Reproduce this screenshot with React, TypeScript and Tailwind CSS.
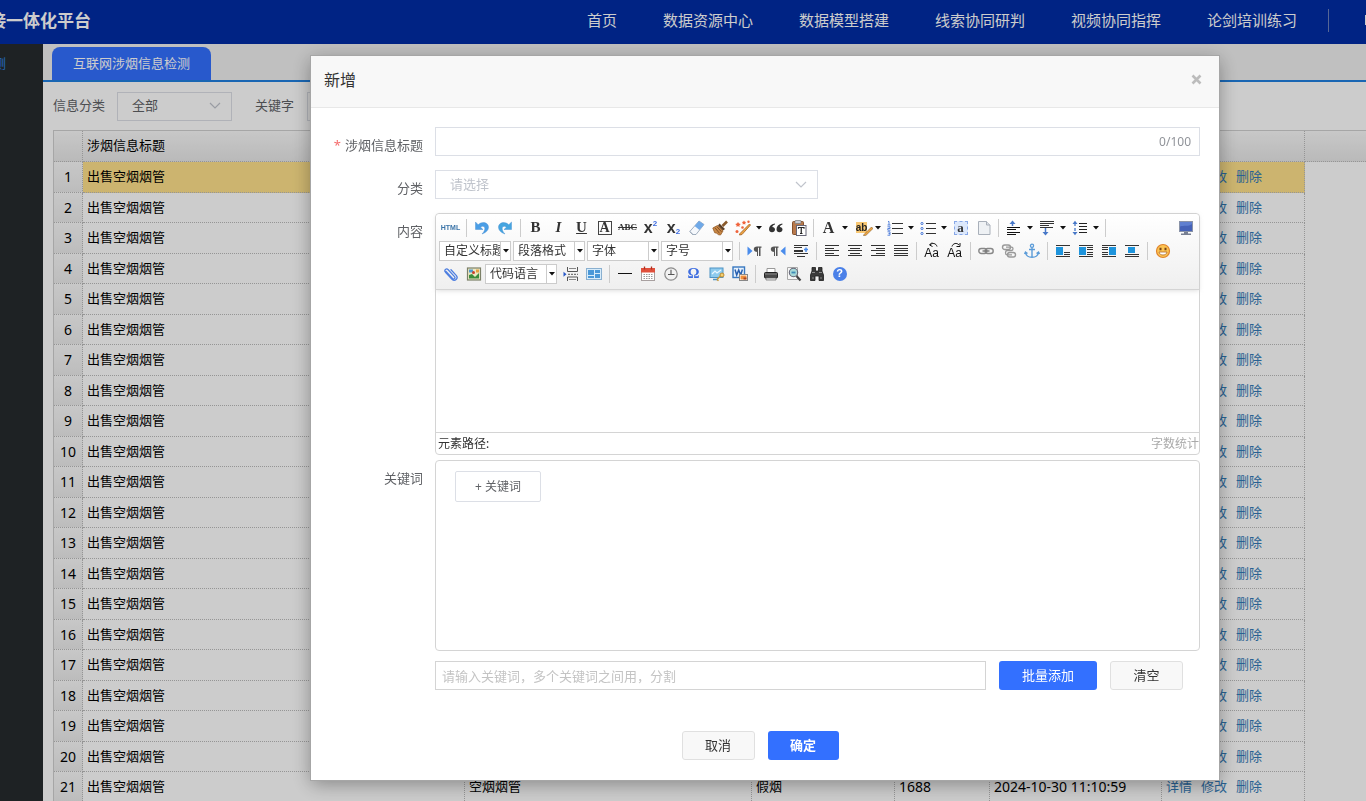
import type { ReactNode } from "react";

const navItems = [
  "首页",
  "数据资源中心",
  "数据模型搭建",
  "线索协同研判",
  "视频协同指挥",
  "论剑培训练习",
];

const rows = Array.from({ length: 21 }, (_, i) => ({
  id: i + 1,
  title: "出售空烟烟管",
  name: "空烟烟管",
  type: "假烟",
  count: 1688,
  time: "2024-10-30 11:10:59",
}));

const Svg = ({ children }: { children: ReactNode }) => (
  <svg width="16" height="16" viewBox="0 0 16 16" fill="none" aria-hidden="true">
    {children}
  </svg>
);

const Lines = ({ d, color = "#333" }: { d: string; color?: string }) => (
  <path d={d} stroke={color} strokeWidth="1" shapeRendering="crispEdges" />
);

const Caret = () => (
  <svg width="6" height="4" viewBox="0 0 6 4" className="shrink-0" aria-hidden="true">
    <path d="M0 0h6L3 3.5z" fill="#111" />
  </svg>
);

const Chevron = () => (
  <svg
    width="12"
    height="8"
    viewBox="0 0 12 8"
    fill="none"
    className="pointer-events-none shrink-0"
    aria-hidden="true"
  >
    <path d="M1 1l5 5 5-5" stroke="#c0c4cc" strokeWidth="1.2" />
  </svg>
);

const Serif = ({ children, className = "" }: { children: ReactNode; className?: string }) => (
  <span className={"font-['Liberation_Serif',serif] leading-none text-[#333] " + className}>
    {children}
  </span>
);

const UndoIcon = () => (
  <Svg>
    <path d="M1.500 2v7.500H9L6.600 7.200c2-1.600 4.200-.8 4.200 1.500 0 1.800-1 3.300-2.800 5.300 4.400-1.600 6.500-4 6.500-6.800C14.500 2.500 8.200.8 4.200 4.700z" fill="#4a9ee6" stroke="#3c86cc" strokeWidth=".4" />
  </Svg>
);

const RedoIcon = () => (
  <Svg>
    <path d="M14.500 2v7.500H7l2.400-2.300c-2-1.600-4.200-.8-4.200 1.500 0 1.800 1 3.300 2.800 5.300-4.400-1.600-6.500-4-6.500-6.800C1.500 2.500 7.800.8 11.800 4.700z" fill="#45a5e0" stroke="#3c86cc" strokeWidth=".4" />
  </Svg>
);

const EraserIcon = () => (
  <Svg>
    <path d="M10 1L15 4.500 7 14.500H3.500L.8 11.500z" fill="#f5f8fc" stroke="#8c9cae" strokeWidth=".8" />
    <path d="M10 1L15 4.500l-4.500 5.600L5.600 6z" fill="#6fa9e8" />
    <path d="M.8 11.500l3.200 3" stroke="#9aa8b8" strokeWidth="1" />
  </Svg>
);

const BroomIcon = () => (
  <Svg>
    <path d="M15 1.500L10.500 6" stroke="#8a5a2b" strokeWidth="2.600" />
    <path d="M7.500 3.500l5.500 5.500-2 1.500L6 5.500z" fill="#5c3e24" />
    <path d="M5.500 5.500l5.500 5.500L8.500 15l-2-.3-1.800-1.500-2-.5L.8 8z" fill="#c98846" stroke="#945a26" strokeWidth=".8" />
    <path d="M3 7.800l4.500 5.500M5 6.800l4.500 5" stroke="#7a4820" strokeWidth=".9" />
  </Svg>
);

const MagicIcon = () => (
  <Svg>
    <path d="M5 13.500L14.500 4l1 1L7 14.500l-2.500.5z" fill="#f0a640" stroke="#a8692c" strokeWidth=".9" />
    <g fill="#f0643c">
      <path d="M3 2l1 1.500L5.800 4 4.400 5.200 4.500 7 3 6 1.500 7l.1-1.800L.2 4 2 3.500z" />
      <path d="M9 .5l.8 1.200 1.400.3-1 1 .2 1.500L9 3.900l-1.400.6.200-1.500-1-1 1.400-.3z" />
      <circle cx="13.500" cy="1.800" r="1.200" />
      <circle cx="7.500" cy="7.500" r="1.300" />
      <circle cx="2" cy="11.500" r="1.500" />
    </g>
  </Svg>
);

const QuoteIcon = () => (
  <Svg>
    <g fill="#333">
      <path d="M6.800 3.500C3 4 1 6.200 1 9.300 1 11.300 2.300 12.300 4 12.300c1.800 0 3-1.100 3-2.700 0-1.500-1.100-2.500-2.700-2.500C4.500 5.800 5.300 5 7 4.500z" />
      <path d="M14.300 3.500c-3.800.5-5.800 2.700-5.800 5.800 0 2 1.300 3 3 3 1.800 0 3-1.100 3-2.700 0-1.500-1.100-2.500-2.700-2.500.2-1.300 1-2.100 2.700-2.600z" />
    </g>
  </Svg>
);

const PasteIcon = () => (
  <Svg>
    <rect x="1.500" y="1.500" width="11" height="13" rx="1" fill="#b8794c" stroke="#85512c" />
    <rect x="4" y=".5" width="6" height="3" rx=".6" fill="#c9ccd2" stroke="#777" strokeWidth=".7" />
    <rect x="5.500" y="5.500" width="9.500" height="10" fill="#fff" stroke="#667" />
    <path d="M7.500 8.800V7.500H13v1.300M10.250 7.500v6M9 13.500h2.500" stroke="#222" strokeWidth="1.200" />
  </Svg>
);

const HighlightIcon = () => (
  <span className="relative flex h-4 w-4 items-center justify-center">
    <span className="bg-[#f9c873] font-['Liberation_Sans',sans-serif] text-[10px] leading-[11px] font-bold text-[#222]">ab</span>
    <svg width="10" height="10" viewBox="0 0 10 10" className="absolute right-[-3px] bottom-0" aria-hidden="true">
      <path d="M1 8.500L8.500 1 10 2.500 3 9.300l-2.500.3z" fill="#f0a640" stroke="#855c2c" strokeWidth=".6" />
    </svg>
  </span>
);

const OrderedIcon = () => (
  <Svg>
    <Lines d="M5 3.500h11M5 8.500h11M5 13.500h11" />
    <path d="M1 1.500h1V5M.5 5h3M.5 6.800h2.500v1.700H.8v1.700H3.500M.5 11.800H3v1.700H1.500M3 13.500v1.700H.5" stroke="#4878d8" strokeWidth=".9" />
  </Svg>
);

const UnorderedIcon = () => (
  <Svg>
    <Lines d="M6 3.500h10M6 8.500h10M6 13.500h10" />
    <g stroke="#4878d8">
      <circle cx="2" cy="3.500" r="1.100" />
      <circle cx="2" cy="8.500" r="1.100" />
      <circle cx="2" cy="13.500" r="1.100" />
    </g>
  </Svg>
);

const SelectAllIcon = () => (
  <span className="flex h-[14px] w-[14px] items-center justify-center border border-dashed border-[#88a8e8] bg-[#dce8fc]">
    <Serif className="text-[13px] font-bold">a</Serif>
  </span>
);

const PageIcon = () => (
  <Svg>
    <path d="M2.500 1.500h8l3.500 3.500v9.500h-11.500z" fill="#eef1f4" stroke="#a9b0ba" />
    <path d="M10.500 1.500V5H14" fill="#dde2e8" stroke="#a9b0ba" />
  </Svg>
);

const SpaceBeforeIcon = () => (
  <Svg>
    <Lines d="M1 7.500h13M1 9.500h9M1 12.500h13M1 14.500h9" color="#111" />
    <path d="M6.500 6V2" stroke="#4878c8" strokeWidth="1.500" />
    <path d="M3.500 4l3-3.500 3 3.500z" fill="#4878c8" />
  </Svg>
);

const SpaceAfterIcon = () => (
  <Svg>
    <Lines d="M1 1.500h14M1 3.500h14M1 5.500h9M1 7.500h13" color="#333" />
    <path d="M6.500 8v5" stroke="#4878c8" strokeWidth="1.500" />
    <path d="M3.500 12l3 3.500 3-3.500z" fill="#4878c8" />
  </Svg>
);

const LineHeightIcon = () => (
  <Svg>
    <Lines d="M7 3.500h8M7 6.500h8M7 9.500h8M7 12.500h8" color="#222" />
    <path d="M3 3v10" stroke="#4878c8" strokeWidth="1.300" strokeDasharray="3 2" />
    <path d="M.5 4L3 .8 5.500 4zM.5 12L3 15.200 5.500 12z" fill="#4878c8" />
  </Svg>
);

const MonitorIcon = () => (
  <Svg>
    <rect x="1.500" y="1.500" width="13" height="10" fill="#4562b8" stroke="#8a93a8" />
    <path d="M2 6.500C6 5 10 7 14 4V2H2z" fill="#5f7fd0" />
    <path d="M6 12h4v1.500H6zM3 13.500h10V15H3z" fill="#777f92" />
  </Svg>
);

const LtrIcon = ({ flip = false }: { flip?: boolean }) => (
  <Svg>
    <path d={flip ? "M15.500 3.500v9L10.500 8z" : "M.5 3.500v9l5-4.500z"} fill="#4a8cec" />
    <g transform={flip ? "translate(-6 0)" : undefined}>
      <path d="M10.500 9C8 9 6.800 7.800 6.800 6.200 6.800 4.500 8 3.500 10 3.500h4.500v1.200h-1V13H12V4.700h-1V13H10V9z" fill="#555" />
    </g>
  </Svg>
);

const IndentIcon = () => (
  <Svg>
    <Lines d="M1 2.500h14M1 4.500h8M1 7.500h9M1 8.500h9M1 10.500h14M4 13.500h8" color="#333" />
    <path d="M11 6.500h4M13 4.500v4.500" stroke="#4a8cec" strokeWidth="1.500" />
  </Svg>
);

const CaseIcon = ({ lower = false }: { lower?: boolean }) => (
  <span className="relative flex h-4 w-4 items-end justify-center">
    <span className="font-['Liberation_Sans',sans-serif] text-[12px] leading-[12px] text-[#111]">Aa</span>
    <svg width="10" height="6" viewBox="0 0 10 6" className="absolute -top-[1px] left-1" fill="none" aria-hidden="true">
      {lower ? (
        <path d="M1 4.500C2 1 6 .5 8 3M9 1v3.500H5.500" stroke="#111" />
      ) : (
        <path d="M9 4.500C8 1 4 .5 2 3M4 .5L1.500 3l3 1.500" stroke="#111" />
      )}
    </svg>
  </span>
);

const LinkIcon = () => (
  <Svg>
    <rect x=".8" y="5.500" width="8" height="5" rx="2.500" stroke="#888" strokeWidth="1.400" />
    <rect x="7.200" y="5.500" width="8" height="5" rx="2.500" stroke="#888" strokeWidth="1.400" />
    <path d="M4.500 8h7" stroke="#777" strokeWidth="1.400" />
  </Svg>
);

const UnlinkIcon = () => (
  <Svg>
    <rect x="1.500" y="2" width="8" height="4.500" rx="2.250" stroke="#999" strokeWidth="1.400" />
    <rect x="6.500" y="9.500" width="8" height="4.500" rx="2.250" stroke="#999" strokeWidth="1.400" />
    <path d="M5 4.200h5.500c2 0 2 3 0 3.300H6c-2 .3-2 4 0 4.300h5" stroke="#999" strokeWidth="1.300" />
  </Svg>
);

const AnchorIcon = () => (
  <Svg>
    <circle cx="8" cy="2.800" r="1.600" stroke="#5a9bd8" strokeWidth="1.300" />
    <path d="M8 4.500V14M5 6.500h6M1.500 9.500c.5 3 3 4.800 6.500 4.800s6-1.800 6.500-4.800M.5 11l1-2 2 1.500M15.500 11l-1-2-2 1.500" stroke="#5a9bd8" strokeWidth="1.400" />
  </Svg>
);

const FloatIcon = ({ kind }: { kind: "none" | "left" | "right" | "center" }) => {
  const lines = {
    none: "M1 2.500h14M9 9.500h6M9 11.500h6M1 13.500h14",
    left: "M1 2.500h14M9 4.500h6M9 6.500h6M9 9.500h6M9 11.500h6M1 13.500h14",
    right: "M1 2.500h14M1 4.500h6M1 6.500h6M1 9.500h6M1 11.500h6M1 13.500h14",
    center: "M1 2.500h14M1 11.500h14M1 13.500h14",
  }[kind];
  const x = { none: 1, left: 1, right: 8, center: 4 }[kind];
  return (
    <Svg>
      <Lines d={lines} />
      <rect x={x} y="4" width="7" height={kind === "center" ? 6 : 8} fill="#1e94dc" />
    </Svg>
  );
};

const SmileIcon = () => (
  <Svg>
    <circle cx="8" cy="8" r="6.500" fill="#fcc452" stroke="#e0842c" strokeWidth="1.200" />
    <path d="M4.500 4.800h2v2.400h-2zM9.500 4.800h2v2.400h-2z" fill="#7a4416" />
    <path d="M4 9h8c-.5 4-7.500 4-8 0z" fill="#fff" stroke="#b06828" strokeWidth=".8" />
  </Svg>
);

const AttachIcon = () => (
  <Svg>
    <path d="M3 5.500l6.500 7c1.300 1.400 3.300-.4 2-1.900L5.200 3.800C3.300 1.800.7 4 2.500 6.200l6.500 7c2.800 2.800 6.800-.7 4.200-3.800L8 3.800" stroke="#4f7fe0" strokeWidth="1.300" strokeLinecap="round" />
  </Svg>
);

const ImageIcon = () => (
  <Svg>
    <rect x="1.500" y="2" width="13" height="12" fill="#ece8c4" stroke="#7c8068" strokeWidth="1.200" />
    <path d="M3 3.500h4v3H3z" fill="#4f9ad0" />
    <path d="M3 12.500V9l3-1 3 3 4-4v5.500z" fill="#3c8c3c" />
    <circle cx="7.500" cy="6.500" r="1.500" fill="#c8402c" />
    <path d="M10 3.500h3v3h-3z" fill="#e8a040" />
  </Svg>
);

const PageBreakIcon = () => (
  <Svg>
    <path d="M4.500 1v4.500h10V1M4.500 15v-4h10v4" fill="#f4f4f4" stroke="#555" />
    <path d="M6 2.500h7M6 13.500h7" stroke="#888" />
    <path d="M5 8.300h10" stroke="#555" strokeDasharray="2 1" />
    <path d="M.5 5.800L3.500 8.300l-3 2.500z" fill="#2858c8" />
  </Svg>
);

const TemplateIcon = () => (
  <Svg>
    <rect x=".5" y="2.500" width="15" height="11" fill="#d8ecfa" stroke="#8ab0d0" />
    <path d="M2 4h6v5H2zM2 10h6v2H2zM9 4h5v3H9zM9 8h5v4H9z" fill="#4a98d8" />
  </Svg>
);

const CalendarIcon = () => (
  <Svg>
    <rect x="1.500" y="2.500" width="13" height="12" fill="#fff" stroke="#a8a0a0" />
    <path d="M1 2h14v4.500H1z" fill="#e0503c" />
    <path d="M4.500.5v3M11.500.5v3" stroke="#b03020" strokeWidth="1.300" />
    <path d="M3.500 8.500h9M3.500 10.500h9M3.500 12.500h9" stroke="#999" strokeDasharray="1.500 1" />
  </Svg>
);

const ClockIcon = () => (
  <Svg>
    <circle cx="8" cy="8" r="6.200" fill="#f2f2f2" stroke="#8c8c8c" strokeWidth="1.200" />
    <path d="M8 3.800V8.500h3.500M5 8.500h3" stroke="#555" strokeWidth="1.100" />
  </Svg>
);

const MapIcon = () => (
  <Svg>
    <rect x="1" y="2" width="13" height="9.500" fill="#8ecbee" stroke="#4f94c4" />
    <path d="M3 8l3-3 2 2 4-3" stroke="#e8f6ff" strokeWidth="1.200" />
    <path d="M4 13.500h5" stroke="#4f94c4" strokeWidth="1.500" />
    <path d="M8 13.500l4-4M8 13.500l1.500 1.300" stroke="#c89838" strokeWidth="1.500" />
    <circle cx="13" cy="9" r="2" fill="#f4d070" stroke="#c08c30" />
  </Svg>
);

const WordIcon = () => (
  <Svg>
    <rect x="1" y="1" width="11.500" height="10.500" fill="#e8f2fc" stroke="#3878c0" strokeWidth="1.400" />
    <path d="M3 3.500l1.700 5.500 2-5 2 5 1.700-5.500" stroke="#2860b0" strokeWidth="1.500" />
    <rect x="7.500" y="8.500" width="8" height="6" fill="#fff" stroke="#888" />
    <path d="M8.500 9.500h6v4h-6z" fill="#f0903c" />
    <path d="M11.500 11.500h3v2h-3z" fill="#a84420" />
  </Svg>
);

const PrintIcon = () => (
  <Svg>
    <path d="M4 2.500h8V7H4z" fill="#fff" stroke="#999" />
    <rect x="1.500" y="6.500" width="13" height="5.500" rx="1" fill="#4a4a4a" stroke="#222" />
    <path d="M2 8h12" stroke="#888" />
    <path d="M3 12h10v2H3z" fill="#e8e8e8" stroke="#777" strokeWidth=".8" />
  </Svg>
);

const PreviewIcon = () => (
  <Svg>
    <path d="M1.500 1.500h10v12h-10z" fill="#f6f6f6" stroke="#a8a8a8" />
    <circle cx="7.500" cy="6.500" r="4.200" fill="#a8d8d8" stroke="#667" strokeWidth="1.100" />
    <path d="M5.500 6.500h4" stroke="#3c8cb8" strokeWidth="1.800" />
    <path d="M10.500 10l4 4.500" stroke="#444" strokeWidth="2.200" />
  </Svg>
);

const FindIcon = () => (
  <Svg>
    <path d="M3 1.500h3.500V5h3V1.500H13V5l1.500 4v5.500H10V10H6v4.500H1.500V9L3 5z" fill="#3a3a3a" stroke="#1c1c1c" strokeWidth=".8" />
    <path d="M3 6.500h3M10 6.500h3M3 12h2M11 12h2" stroke="#8c8c8c" />
  </Svg>
);

const HelpIcon = () => (
  <span className="flex h-[14px] w-[14px] items-center justify-center rounded-full bg-[#4a80e8] font-['Liberation_Sans',sans-serif] text-[11px] leading-none font-bold text-white">
    ?
  </span>
);

type ToolProps = { label: string; menu?: boolean; children: ReactNode };

const Tool = ({ label, menu, children }: ToolProps) => (
  <button type="button" aria-label={label} title={label} className="flex h-[23px] shrink-0 items-center">
    <span className="flex w-[23px] items-center justify-center">{children}</span>
    {menu && (
      <span className="flex w-[10px] items-center justify-center">
        <Caret />
      </span>
    )}
  </button>
);

const Separator = ({ narrow = false }: { narrow?: boolean }) => (
  <span className={"flex shrink-0 justify-center " + (narrow ? "w-[7px]" : "w-2")}>
    <span className="h-[18px] w-px bg-[#ccc]" />
  </span>
);

const Combo = ({ label }: { label: string }) => (
  <span className="mr-0.5 flex h-5 w-[72px] shrink-0 items-center border border-[#ccc] bg-white">
    <select
      aria-label={label}
      className="h-full min-w-0 flex-1 cursor-pointer appearance-none overflow-hidden bg-transparent pl-1 text-xs text-[#333] outline-none"
    >
      <option>{label}</option>
    </select>
    <span className="flex h-full w-[10px] shrink-0 items-center justify-center border-l border-[#ccc]">
      <Caret />
    </span>
  </span>
);

const EditorToolbar = () => (
  <div className="rounded-t border-b border-[#d4d4d4] bg-linear-to-b from-white to-[#efefef] pt-0.5 pb-1 pl-[3px] shadow-[0_1px_4px_rgba(204,204,204,0.6)]">
    <div className="flex items-center">
      <Tool label="源代码">
        <span className="font-['Liberation_Sans',sans-serif] text-[7px] leading-none font-bold text-[#3a74a8]">HTML</span>
      </Tool>
      <Separator />
      <Tool label="撤销"><UndoIcon /></Tool>
      <Tool label="重做"><RedoIcon /></Tool>
      <Separator />
      <Tool label="加粗"><Serif className="text-[15px] font-bold">B</Serif></Tool>
      <Tool label="斜体"><Serif className="text-[15px] font-bold italic">I</Serif></Tool>
      <Tool label="下划线"><Serif className="text-[15px] font-bold underline">U</Serif></Tool>
      <Tool label="字符边框">
        <span className="flex h-[14px] w-[14px] items-center justify-center border border-[#444]">
          <Serif className="text-sm font-bold">A</Serif>
        </span>
      </Tool>
      <Tool label="删除线"><Serif className="text-[9px] font-bold line-through">ABC</Serif></Tool>
      <Tool label="上标">
        <span className="flex items-center font-['Liberation_Sans',sans-serif] leading-none font-bold text-[#333]">
          <span className="text-base leading-none">x</span>
          <span className="self-start text-[8px] text-[#3c6ce0]">2</span>
        </span>
      </Tool>
      <Tool label="下标">
        <span className="flex items-center font-['Liberation_Sans',sans-serif] leading-none font-bold text-[#333]">
          <span className="text-base leading-none">x</span>
          <span className="self-end text-[8px] text-[#3c6ce0]">2</span>
        </span>
      </Tool>
      <Tool label="清除格式"><EraserIcon /></Tool>
      <Tool label="格式刷"><BroomIcon /></Tool>
      <Tool label="自动排版" menu><MagicIcon /></Tool>
      <Tool label="引用"><QuoteIcon /></Tool>
      <Tool label="纯文本粘贴"><PasteIcon /></Tool>
      <Separator narrow />
      <Tool label="字体颜色" menu><Serif className="text-base font-bold">A</Serif></Tool>
      <Tool label="背景色" menu><HighlightIcon /></Tool>
      <Tool label="有序列表" menu><OrderedIcon /></Tool>
      <Tool label="无序列表" menu><UnorderedIcon /></Tool>
      <Tool label="全选"><SelectAllIcon /></Tool>
      <Tool label="清空文档"><PageIcon /></Tool>
      <Separator narrow />
      <Tool label="段前距" menu><SpaceBeforeIcon /></Tool>
      <Tool label="段后距" menu><SpaceAfterIcon /></Tool>
      <Tool label="行间距" menu><LineHeightIcon /></Tool>
      <Separator />
      <div className="mr-0.5 ml-auto">
        <Tool label="全屏"><MonitorIcon /></Tool>
      </div>
    </div>
    <div className="flex items-center">
      <Combo label="自定义标题" />
      <Combo label="段落格式" />
      <Combo label="字体" />
      <Combo label="字号" />
      <Separator />
      <Tool label="从左向右输入"><LtrIcon /></Tool>
      <Tool label="从右向左输入"><LtrIcon flip /></Tool>
      <Tool label="首行缩进"><IndentIcon /></Tool>
      <Separator />
      <Tool label="居左对齐"><Svg><Lines d="M1 2.500h14M1 5.500h9M1 7.500h14M1 10.500h9M1 12.500h14" /></Svg></Tool>
      <Tool label="居中对齐"><Svg><Lines d="M1 2.500h14M3 5.500h10M1 7.500h14M3 10.500h10M1 12.500h14" /></Svg></Tool>
      <Tool label="居右对齐"><Svg><Lines d="M1 2.500h14M6 5.500h9M1 7.500h14M6 10.500h9M1 12.500h14" /></Svg></Tool>
      <Tool label="两端对齐"><Svg><Lines d="M1 2.500h14M1 5.500h14M1 7.500h14M1 10.500h14M1 12.500h14" /></Svg></Tool>
      <Separator />
      <Tool label="字母大写"><CaseIcon /></Tool>
      <Tool label="字母小写"><CaseIcon lower /></Tool>
      <Separator />
      <Tool label="超链接"><LinkIcon /></Tool>
      <Tool label="取消链接"><UnlinkIcon /></Tool>
      <Tool label="锚点"><AnchorIcon /></Tool>
      <Separator />
      <Tool label="默认"><FloatIcon kind="none" /></Tool>
      <Tool label="左浮动"><FloatIcon kind="left" /></Tool>
      <Tool label="右浮动"><FloatIcon kind="right" /></Tool>
      <Tool label="居中"><FloatIcon kind="center" /></Tool>
      <Separator />
      <Tool label="表情"><SmileIcon /></Tool>
    </div>
    <div className="flex items-center">
      <Tool label="附件"><AttachIcon /></Tool>
      <Tool label="图片"><ImageIcon /></Tool>
      <Combo label="代码语言" />
      <Tool label="分页"><PageBreakIcon /></Tool>
      <Tool label="模板"><TemplateIcon /></Tool>
      <Separator />
      <Tool label="分隔线"><Svg><Lines d="M1 7.500h14" color="#111" /></Svg></Tool>
      <Tool label="日期"><CalendarIcon /></Tool>
      <Tool label="时间"><ClockIcon /></Tool>
      <Tool label="特殊字符"><Serif className="text-[15px] font-bold !text-[#3c6ce0]">Ω</Serif></Tool>
      <Tool label="截图"><MapIcon /></Tool>
      <Tool label="图片转存"><WordIcon /></Tool>
      <Separator />
      <Tool label="打印"><PrintIcon /></Tool>
      <Tool label="预览"><PreviewIcon /></Tool>
      <Tool label="查询替换"><FindIcon /></Tool>
      <Tool label="帮助"><HelpIcon /></Tool>
    </div>
  </div>
);

const labelClass = "pt-2 text-right text-[13px] leading-5 text-[#606266]";

const AddDialog = () => (
  <div className="fixed inset-0 z-10 overflow-hidden bg-black/20 pt-14 pr-[147px] pl-[311px]">
    <form
      role="dialog"
      aria-labelledby="dialog-title"
      className="bg-white shadow-[0_4px_18px_rgba(0,0,0,0.35)] ring-1 ring-[#a6a6a6]"
      onSubmit={(e) => e.preventDefault()}
    >
      <div className="flex h-[52px] items-center justify-between border-b border-[#e8e8e8] bg-[#f8f8f8] pr-[17px] pb-1 pl-[13px]">
        <h2 id="dialog-title" className="text-base text-[#333]">新增</h2>
        <button type="button" aria-label="关闭">
          <svg width="11" height="11" viewBox="0 0 11 11" aria-hidden="true">
            <path d="M1.500 1.500l8 8M9.500 1.500l-8 8" stroke="#bcbcbc" strokeWidth="2.600" />
          </svg>
        </button>
      </div>

      <div className="grid grid-cols-[112px_1fr] gap-x-3 pt-[19px] pr-[19px]">
        <label htmlFor="title" className={labelClass}>
          <span className="mr-1 text-[#f56c6c]">*</span>涉烟信息标题
        </label>
        <div className="mb-3.5 flex h-[29px] items-center border border-[#dcdfe6] pr-2">
          <input id="title" type="text" maxLength={100} className="h-full min-w-0 flex-1 px-3 text-[13px] outline-none" />
          <span className="text-xs text-[#909399]">0/100</span>
        </div>

        <label htmlFor="category" className={labelClass}>分类</label>
        <div className="mb-3.5 flex h-[29px] w-1/2 items-center border border-[#dcdfe6] pr-[10px]">
          <select id="category" className="h-full min-w-0 flex-1 appearance-none bg-transparent pl-3.5 text-[13px] text-[#c0c4cc] outline-none">
            <option>请选择</option>
          </select>
          <Chevron />
        </div>

        <div className={labelClass}>内容</div>
        <div className="mb-[5px] flex h-[242px] flex-col rounded border border-[#d4d4d4]">
          <EditorToolbar />
          <textarea aria-label="内容" className="min-h-0 w-full flex-1 resize-none p-2 text-sm outline-none" />
          <div className="flex h-[22px] items-center justify-between border-t border-[#d4d4d4] pl-[2px] text-xs">
            <span className="text-[#333]">元素路径:</span>
            <span className="text-[#aaa]">字数统计</span>
          </div>
        </div>

        <div className={labelClass}>关键词</div>
        <div className="h-[191px] rounded border border-[#d4d4d4] pt-[10px] pl-[19px]">
          <button type="button" className="h-[31px] w-[86px] rounded-xs border border-[#dcdfe6] text-xs text-[#606266]">
            + 关键词
          </button>
        </div>

        <div className="col-start-2 mt-[10px] flex items-center pr-[17px]">
          <input
            type="text"
            aria-label="关键词"
            placeholder="请输入关键词，多个关键词之间用，分割"
            className="h-[29px] min-w-0 flex-1 border border-[#d4d4d4] px-1.5 text-[13px] outline-none placeholder:text-[#c4c4c4]"
          />
          <button type="button" className="ml-[13px] h-[29px] w-[98px] rounded-[3px] bg-[#3370ff] text-[13px] text-white">
            批量添加
          </button>
          <button type="button" className="ml-[13px] h-[29px] w-[73px] rounded-[3px] border border-[#e0e0e0] bg-[#f8f8f8] text-[13px] text-[#333]">
            清空
          </button>
        </div>
      </div>

      <div className="flex justify-center gap-[13px] pt-[41px] pr-[10px] pb-5 text-[13px]">
        <button type="button" className="h-[29px] w-[73px] rounded-[3px] border border-[#e0e0e0] bg-[#f8f8f8] text-[#333]">
          取消
        </button>
        <button type="submit" className="h-[29px] w-[71px] rounded-[3px] bg-[#3370ff] font-bold text-white">
          确定
        </button>
      </div>
    </form>
  </div>
);

const cellClass = "border-r border-b border-dotted border-[#bbb] px-1";

const DataTable = () => (
  <table className="w-full table-fixed border-separate border-spacing-0 border-t border-l border-[#d0d0d0] text-left text-[13px] text-black">
    <colgroup>
      <col className="w-[29px]" />
      <col className="w-[382px]" />
      <col className="w-[287px]" />
      <col className="w-[143px]" />
      <col className="w-[95px]" />
      <col className="w-[172px]" />
      <col className="w-[143px]" />
      <col />
    </colgroup>
    <thead>
      <tr className="h-[31px] bg-linear-to-b from-[#fafafa] to-[#e8e8e8]">
        <th className={cellClass} />
        <th className={cellClass + " font-normal"}>涉烟信息标题</th>
        <th className={cellClass} />
        <th className={cellClass} />
        <th className={cellClass} />
        <th className={cellClass} />
        <th className={cellClass} />
        <th className="border-b border-dotted border-[#bbb]" />
      </tr>
    </thead>
    <tbody>
      {rows.map((row) => (
        <tr key={row.id} className="odd:h-[31px] even:h-[30px] first:bg-[#ffe28b]">
          <td className={cellClass + " bg-linear-to-b from-[#fafafa] to-[#ececec] text-center text-sm leading-5"}>{row.id}</td>
          <td className={cellClass}>{row.title}</td>
          <td className={cellClass}>{row.name}</td>
          <td className={cellClass}>{row.type}</td>
          <td className={cellClass + " text-sm leading-5"}>{row.count}</td>
          <td className={cellClass + " text-sm leading-5"}>{row.time}</td>
          <td className={cellClass + " text-[#337ab7]"}>
            <span className="flex gap-[9px]">
              <a href="#detail">详情</a>
              <a href="#edit">修改</a>
              <a href="#delete">删除</a>
            </span>
          </td>
          <td className="bg-white" />
        </tr>
      ))}
    </tbody>
  </table>
);

export default function App() {
  return (
    <div className="flex h-screen flex-col overflow-hidden bg-white font-['Noto_Sans','Noto_Sans_CJK_SC',sans-serif]">
      <header className="flex h-11 shrink-0 items-center bg-[#002ca6] text-white">
        <h1 className="flex w-[91px] justify-end overflow-hidden pb-0.5 text-[17px] leading-6 font-bold whitespace-nowrap">
          接一体化平台
        </h1>
        <nav className="ml-auto flex gap-[46px] text-[15px] leading-6">
          {navItems.map((item) => (
            <a key={item} href="#nav" className="pb-1 whitespace-nowrap">{item}</a>
          ))}
        </nav>
        <span className="mb-1 ml-[31px] h-[23px] w-px bg-[#6c80bc]" />
        <span className="mb-1 ml-9 h-[10px] w-px bg-white" />
      </header>

      <div className="flex min-h-0 flex-1">
        <aside className="w-[43px] shrink-0 bg-[#262b2e] pt-[9px]">
          <a href="#detect" className="flex w-1.5 justify-end overflow-hidden text-[13px] leading-5 whitespace-nowrap text-[#2f86e0]">
            测
          </a>
        </aside>

        <main className="min-w-0 flex-1">
          <div className="flex h-[38px] items-end border-b-2 border-[#2080e0] bg-[#f0f0f0] pl-[9px]">
            <button type="button" className="h-[33px] w-[159px] rounded-t-lg bg-[#3370ff] text-[13px] text-white">
              互联网涉烟信息检测
            </button>
          </div>

          <div className="flex h-12 items-center pl-[10px] text-[13px] text-[#606266]">
            <label htmlFor="type-filter">信息分类</label>
            <div className="ml-3 flex h-[29px] w-[115px] items-center border border-[#dcdfe6] pr-[10px]">
              <select id="type-filter" className="h-full min-w-0 flex-1 appearance-none bg-transparent pl-3.5 outline-none">
                <option>全部</option>
              </select>
              <Chevron />
            </div>
            <label htmlFor="keyword-filter" className="ml-[23px]">关键字</label>
            <input id="keyword-filter" type="text" className="ml-[13px] h-[29px] w-[150px] border border-[#dcdfe6] px-3 outline-none" />
          </div>

          <div className="pl-[10px]">
            <DataTable />
          </div>
        </main>
      </div>

      <AddDialog />
    </div>
  );
}
